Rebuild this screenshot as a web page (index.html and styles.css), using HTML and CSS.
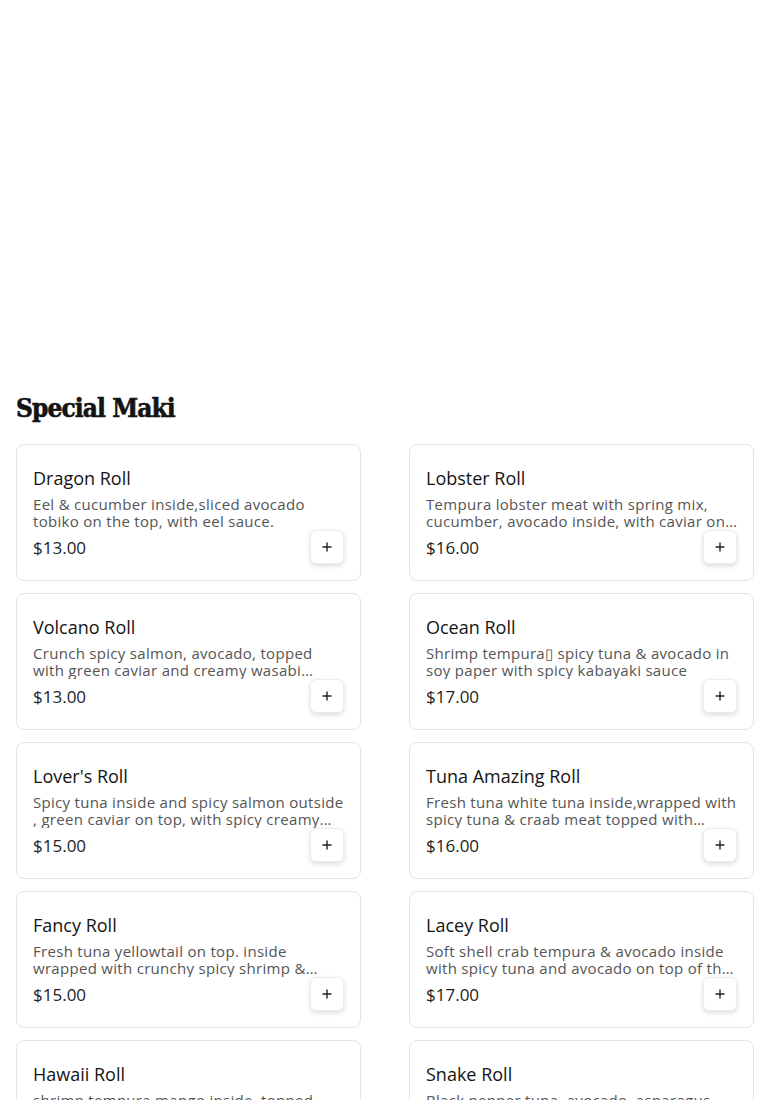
FILE: index.html
```html
<!DOCTYPE html>
<html lang="en">
<head>
<meta charset="utf-8">
<title>Special Maki</title>
<link rel="stylesheet" href="styles.css">
</head>
<body>
<div class="hero"></div>
<section class="menu">
  <h2 class="section-title">Special Maki</h2>
  <div class="grid">
    <div class="card">
      <h3 class="name">Dragon Roll</h3>
      <p class="desc">Eel &amp; cucumber inside,sliced avocado tobiko on the top, with eel sauce.</p>
      <div class="row"><span class="price">$13.00</span><button class="add"><svg viewBox="0 0 10 10" width="10" height="10"><path d="M5 0.5v9M0.5 5h9" stroke="#222" stroke-width="1.4"/></svg></button></div>
    </div>
    <div class="card">
      <h3 class="name">Lobster Roll</h3>
      <p class="desc">Tempura lobster meat with spring mix, cucumber, avocado inside, with caviar on top and special sauce.</p>
      <div class="row"><span class="price">$16.00</span><button class="add"><svg viewBox="0 0 10 10" width="10" height="10"><path d="M5 0.5v9M0.5 5h9" stroke="#222" stroke-width="1.4"/></svg></button></div>
    </div>
    <div class="card">
      <h3 class="name">Volcano Roll</h3>
      <p class="desc">Crunch spicy salmon, avocado, topped with green caviar and creamy wasabi sauce.</p>
      <div class="row"><span class="price">$13.00</span><button class="add"><svg viewBox="0 0 10 10" width="10" height="10"><path d="M5 0.5v9M0.5 5h9" stroke="#222" stroke-width="1.4"/></svg></button></div>
    </div>
    <div class="card">
      <h3 class="name">Ocean Roll</h3>
      <p class="desc">Shrimp tempura▯ spicy tuna &amp; avocado in soy paper with spicy kabayaki sauce</p>
      <div class="row"><span class="price">$17.00</span><button class="add"><svg viewBox="0 0 10 10" width="10" height="10"><path d="M5 0.5v9M0.5 5h9" stroke="#222" stroke-width="1.4"/></svg></button></div>
    </div>
    <div class="card">
      <h3 class="name">Lover's Roll</h3>
      <p class="desc">Spicy tuna inside and spicy salmon outside , green caviar on top, with spicy creamy sauce.</p>
      <div class="row"><span class="price">$15.00</span><button class="add"><svg viewBox="0 0 10 10" width="10" height="10"><path d="M5 0.5v9M0.5 5h9" stroke="#222" stroke-width="1.4"/></svg></button></div>
    </div>
    <div class="card">
      <h3 class="name">Tuna Amazing Roll</h3>
      <p class="desc">Fresh tuna white tuna inside,wrapped with spicy tuna &amp; craab meat topped with tobiko.</p>
      <div class="row"><span class="price">$16.00</span><button class="add"><svg viewBox="0 0 10 10" width="10" height="10"><path d="M5 0.5v9M0.5 5h9" stroke="#222" stroke-width="1.4"/></svg></button></div>
    </div>
    <div class="card">
      <h3 class="name">Fancy Roll</h3>
      <p class="desc">Fresh tuna yellowtail on top. inside wrapped with crunchy spicy shrimp &amp; avocado.</p>
      <div class="row"><span class="price">$15.00</span><button class="add"><svg viewBox="0 0 10 10" width="10" height="10"><path d="M5 0.5v9M0.5 5h9" stroke="#222" stroke-width="1.4"/></svg></button></div>
    </div>
    <div class="card">
      <h3 class="name">Lacey Roll</h3>
      <p class="desc">Soft shell crab tempura &amp; avocado inside with spicy tuna and avocado on top of the roll.</p>
      <div class="row"><span class="price">$17.00</span><button class="add"><svg viewBox="0 0 10 10" width="10" height="10"><path d="M5 0.5v9M0.5 5h9" stroke="#222" stroke-width="1.4"/></svg></button></div>
    </div>
    <div class="card">
      <h3 class="name">Hawaii Roll</h3>
      <p class="desc">shrimp tempura mango inside, topped with tuna and mango sauce.</p>
      <div class="row"><span class="price">$15.00</span><button class="add"><svg viewBox="0 0 10 10" width="10" height="10"><path d="M5 0.5v9M0.5 5h9" stroke="#222" stroke-width="1.4"/></svg></button></div>
    </div>
    <div class="card">
      <h3 class="name">Snake Roll</h3>
      <p class="desc">Black pepper tuna, avocado, asparagus and cucumber inside with eel on top.</p>
      <div class="row"><span class="price">$16.00</span><button class="add"><svg viewBox="0 0 10 10" width="10" height="10"><path d="M5 0.5v9M0.5 5h9" stroke="#222" stroke-width="1.4"/></svg></button></div>
    </div>
  </div>
</section>
</body>
</html>
```

FILE: styles.css
```css
* { box-sizing: border-box; }
body {
  margin: 0;
  background: #fff;
  font-family: "Open Sans", "Noto Sans", sans-serif;
  color: #222;
}
.hero { height: 390px; }
.menu { padding: 0 16px; }
.section-title {
  margin: 0 0 18px;
  font-family: "DejaVu Serif", serif;
  font-stretch: condensed;
  font-weight: 900;
  font-size: 26px;
  line-height: 36px;
  letter-spacing: -0.9px;
  color: #141414;
  -webkit-text-stroke: 0.6px #141414;
}
.grid {
  display: grid;
  grid-template-columns: 1fr 1fr;
  column-gap: 48px;
  row-gap: 12px;
}
.card {
  border: 1px solid #e4e4e4;
  border-radius: 8px;
  padding: 22px 16px 16px;
  background: #fff;
}
.name {
  margin: 0 0 7px;
  font-size: 18px;
  line-height: 22px;
  font-weight: 500;
  color: #141414;
}
.desc {
  margin: 0;
  font-size: 15px;
  line-height: 17px;
  letter-spacing: 0.3px;
  color: #555;
  display: -webkit-box;
  -webkit-line-clamp: 2;
  -webkit-box-orient: vertical;
  overflow: hidden;
  height: 34px;
}
.row {
  display: flex;
  align-items: center;
  justify-content: space-between;
  height: 34px;
}
.price {
  font-size: 17px;
  color: #222;
}
.add {
  width: 34px;
  height: 34px;
  padding: 0;
  border: 1px solid #ececec;
  border-radius: 6px;
  background: #fff;
  box-shadow: 0 2px 5px rgba(0,0,0,0.14);
  display: flex;
  align-items: center;
  justify-content: center;
}
```
